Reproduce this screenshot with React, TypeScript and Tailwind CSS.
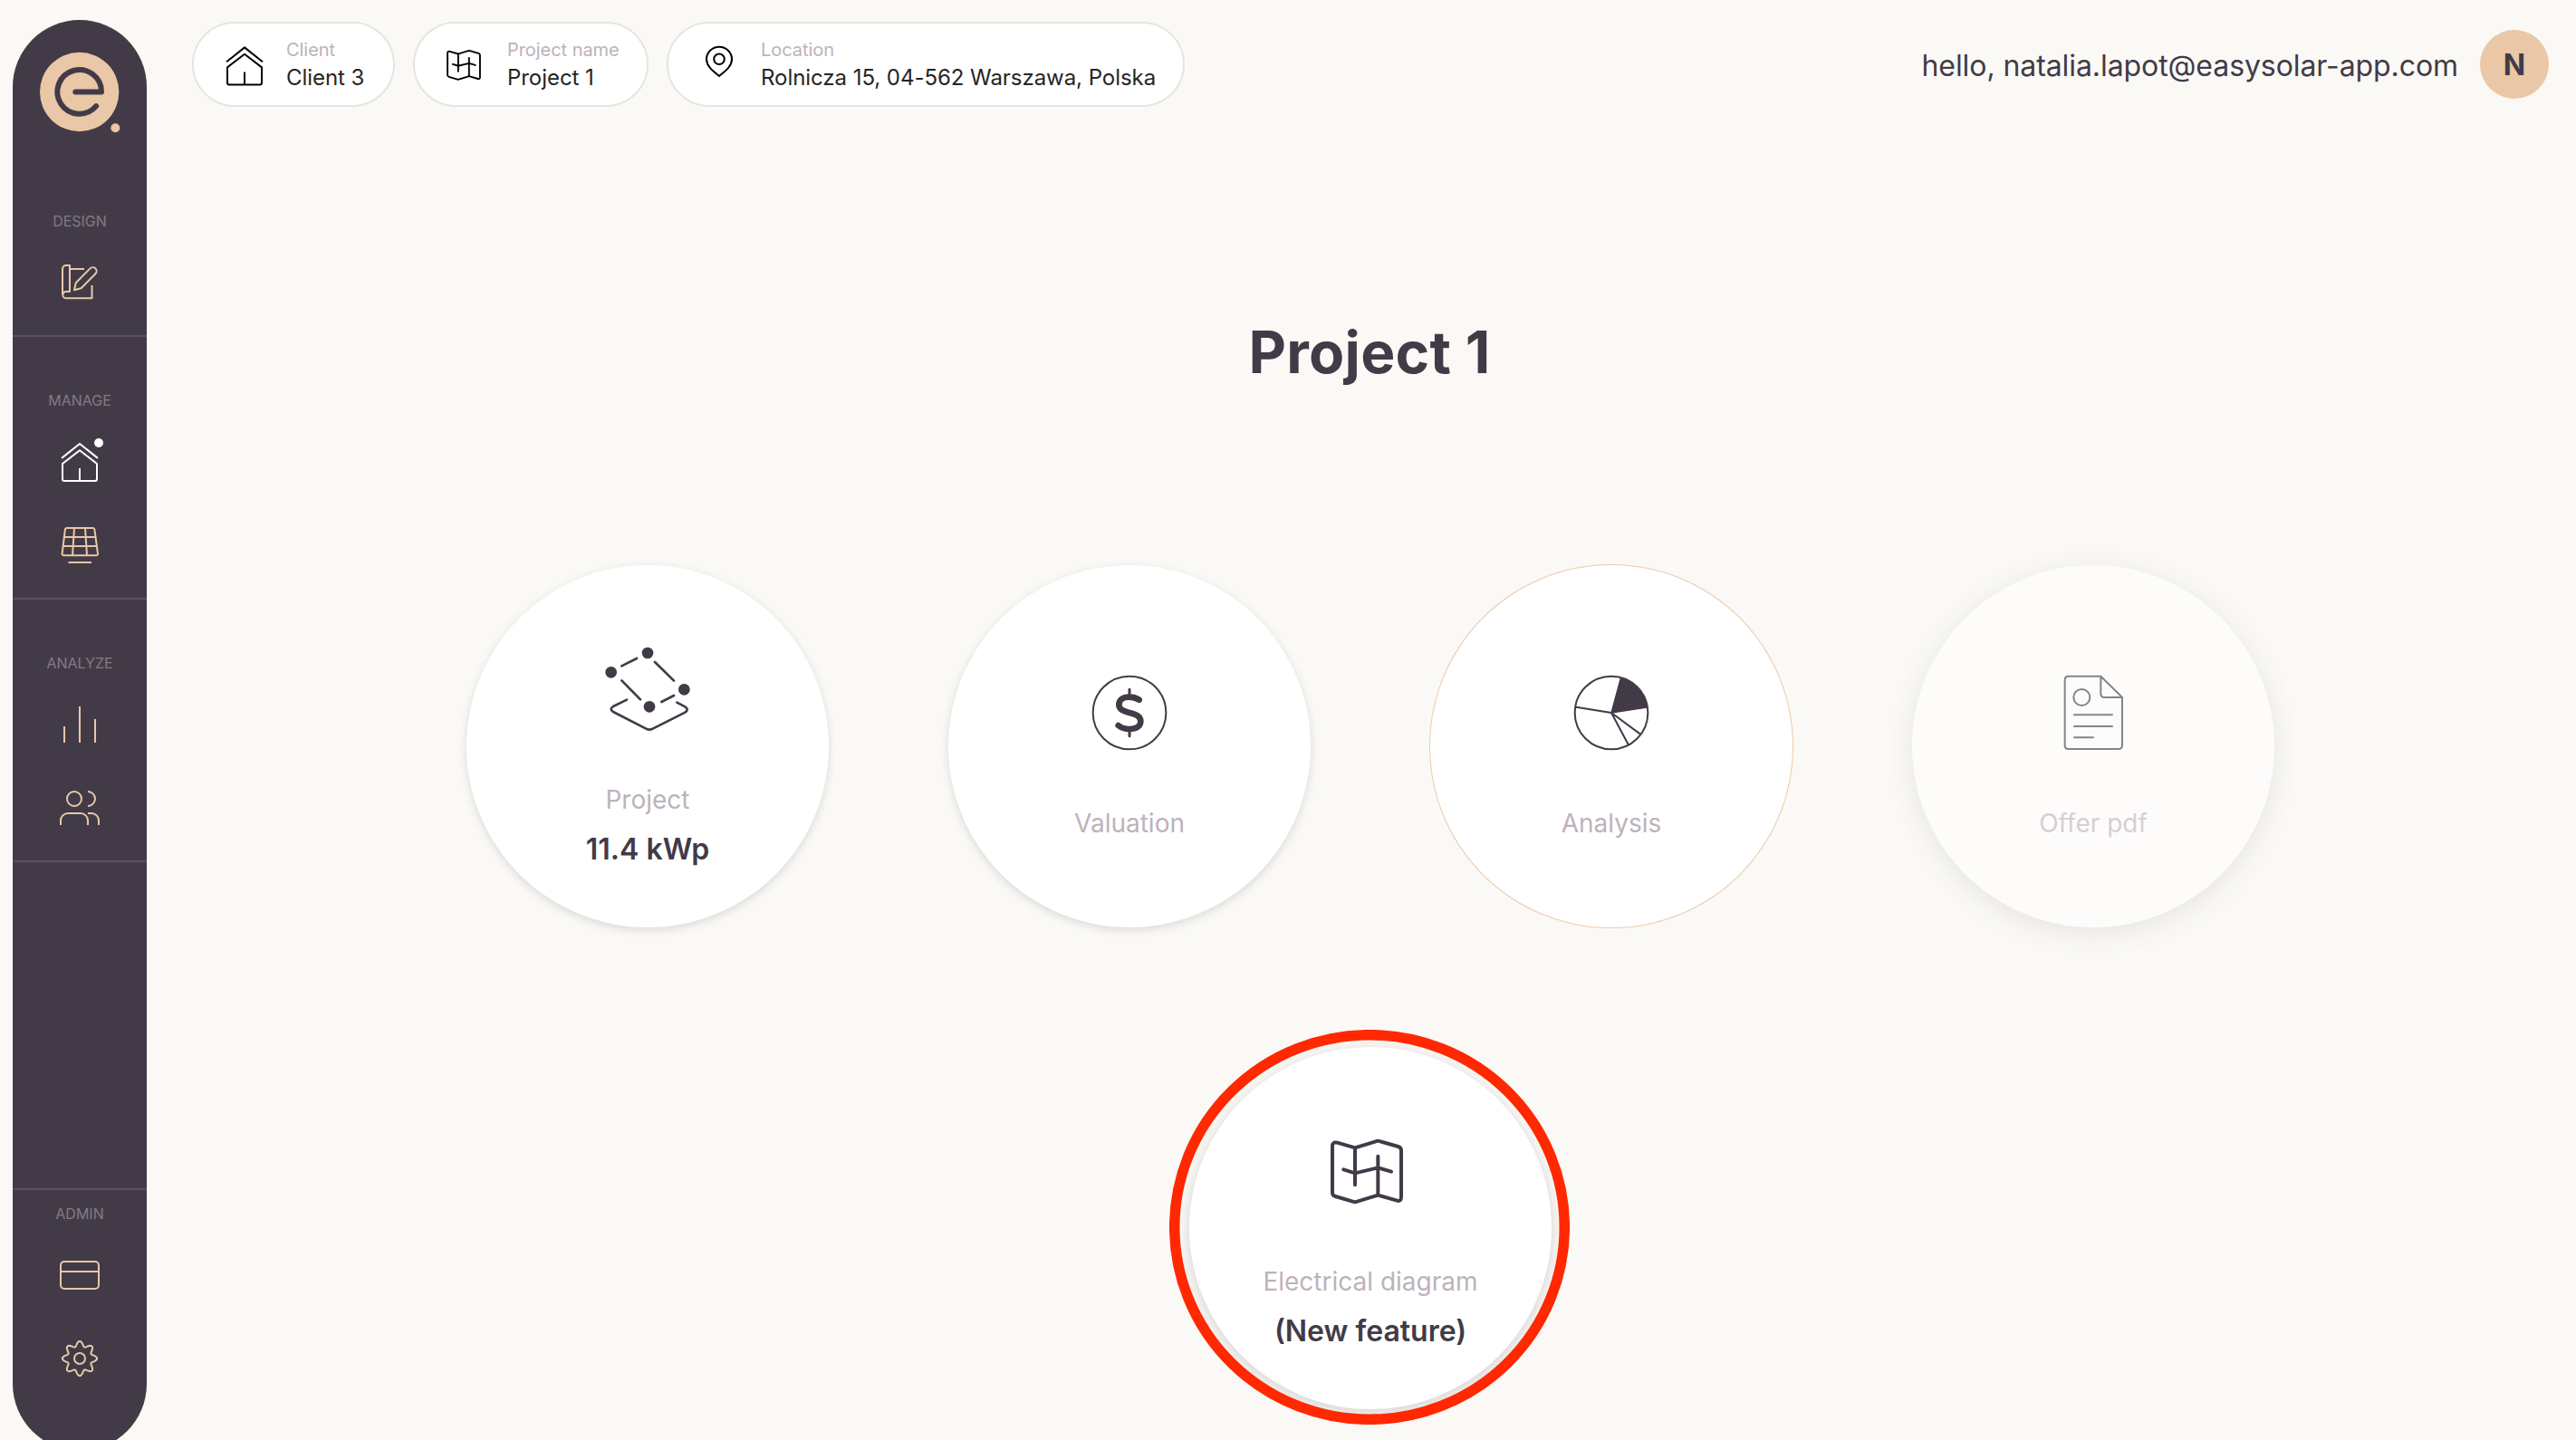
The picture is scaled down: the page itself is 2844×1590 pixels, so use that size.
import type { ReactNode } from 'react'

const MAP_OUTLINE =
  'M648 440L724 417L791 436Q801 439 801 449V603Q801 619 787 615L724 597L648 620L583 601Q573 598 573 588V435Q573 419 589 423L648 440V563M724 597V468M610 512L648 524L724 506L768 519'

// Eight soft teeth around a 44x44 box
const GEAR =
  'M' +
  Array.from({ length: 144 }, (_, i) => {
    const a = (i / 144) * Math.PI * 2
    const r = 16.3 + 2.8 * Math.cos(8 * a)
    return `${(22 + r * Math.sin(a)).toFixed(2)} ${(22 - r * Math.cos(a)).toFixed(2)}`
  }).join('L') +
  'Z'

function NavIcon({ children, className = 'text-[#e9c7a7]', viewBox = '0 0 44 44' }: { children: ReactNode; className?: string; viewBox?: string }) {
  return (
    <svg
      viewBox={viewBox}
      className={`size-[44px] shrink-0 overflow-visible ${className}`}
      fill="none"
      stroke="currentColor"
      strokeWidth="2"
      strokeLinejoin="round"
    >
      {children}
    </svg>
  )
}

function HomeShape() {
  return (
    <>
      <path d="M2.7 17.4L22 2L41.3 17.4" strokeLinecap="round" />
      <path d="M3 24L22 9.3L41 24V41Q41 43 39 43H5Q3 43 3 41ZM22 29V43" />
    </>
  )
}

function NavSection({ label, className, children }: { label: string; className: string; children: ReactNode }) {
  return (
    <div className={`flex flex-col items-center border-[#5b4f5e] ${className}`}>
      <div className="text-[16px] leading-[20px] text-[#857887]">{label}</div>
      <div className="mt-9 flex flex-col gap-12">{children}</div>
    </div>
  )
}

function Sidebar() {
  return (
    <aside className="mt-[22px] ml-[14px] flex h-[1580px] w-[148px] shrink-0 flex-col rounded-full bg-[#423b47]">
      {/* Logo */}
      <div className="flex h-[152px] justify-center pt-[35px]">
        <svg viewBox="129 171 270 270" className="size-[90px]" fill="none">
          <circle cx="263" cy="304.5" r="131" fill="#e9c7a7" />
          <path
            d="M250 304.5H336A73 73 0 1 0 318.5 351.5"
            stroke="#423b47"
            strokeWidth="18"
            strokeLinecap="round"
            strokeLinejoin="round"
          />
          <circle cx="382" cy="423.5" r="15" fill="#e9c7a7" />
        </svg>
      </div>

      <NavSection label="DESIGN" className="border-b-2 pt-[60px] pb-9">
        <NavIcon>
          <path d="M3 35V7A4 4 0 0 1 7 3H11V32H7A3.5 3.5 0 0 0 7 39.3H35.5V25M11 7H27" />
          <path d="M16 30.3L17.8 22.2L33.5 6.4A4.1 4.1 0 0 1 39.4 12.2L23.6 28.3Z" />
        </NavIcon>
      </NavSection>

      <NavSection label="MANAGE" className="border-b-2 pt-[60px] pb-9">
        <NavIcon className="text-white">
          <HomeShape />
          <circle cx="43" cy="1" r="5" fill="currentColor" stroke="none" />
        </NavIcon>
        <NavIcon>
          <path d="M8 3H36.5Q38.2 3 38.4 4.7L42 31.3Q42.2 33.2 40.4 33.2H4.2Q2.4 33.2 2.6 31.3L5.9 4.7Q6.1 3 8 3ZM5 13H39.4M4 23H40.8M16 3L14 33M28 3L30 33M9.5 41H35" />
        </NavIcon>
      </NavSection>

      <NavSection label="ANALYZE" className="border-b-2 pt-[60px] pb-9">
        <NavIcon>
          <path d="M5 42V24M22 42V2M39 42V16" />
        </NavIcon>
        <NavIcon>
          <circle cx="16" cy="12" r="8" />
          <path d="M1 41V36A8 8 0 0 1 9 28H23A8 8 0 0 1 31 36V41M31 4A8 8 0 0 1 31 20M31 28H35A8 8 0 0 1 43 36V41" />
        </NavIcon>
      </NavSection>

      <NavSection label="ADMIN" className="mt-auto h-[290px] border-t-2 pt-4">
        <NavIcon>
          <rect x="1" y="7" width="42" height="30" rx="4" />
          <path d="M1 18H43" />
        </NavIcon>
        <NavIcon>
          <path d={GEAR} />
          <circle cx="22" cy="22" r="6" />
        </NavIcon>
      </NavSection>
    </aside>
  )
}

function InfoPill({ icon, label, value, className }: { icon: ReactNode; label: string; value: string; className: string }) {
  return (
    <div className={`flex h-[94px] items-center gap-6 rounded-full border-2 border-[#e8e5e1] bg-white pl-[34px] whitespace-nowrap ${className}`}>
      {icon}
      <div>
        <div className="text-[20px] leading-[28px] tracking-[-0.05px] text-[#bdb2bb]">{label}</div>
        <div className="pt-px text-[24px] leading-[32px] tracking-[-0.05px] text-[#252525]">{value}</div>
      </div>
    </div>
  )
}

function Header() {
  return (
    <header className="flex h-[142px] items-center gap-5 pr-[30px] pl-[50px]">
      <InfoPill
        label="Client"
        value="Client 3"
        className="w-[224px]"
        icon={
          <NavIcon className="text-black" viewBox="0 -1.4 44 44">
            <HomeShape />
          </NavIcon>
        }
      />
      <InfoPill
        label="Project name"
        value="Project 1"
        className="w-[260px]"
        icon={
          <svg viewBox="559.7 373 280 280" className="size-[44px] shrink-0" fill="none" stroke="#000" strokeWidth="12" strokeLinecap="round" strokeLinejoin="round">
            <path d={MAP_OUTLINE} />
          </svg>
        }
      />
      <InfoPill
        label="Location"
        value="Rolnicza 15, 04-562 Warszawa, Polska"
        className="w-[572px]"
        icon={
          <NavIcon className="text-black">
            <path d="M22 35C16 30 8 24.5 8 16.5A14 13.8 0 0 1 36 16.5C36 24.5 28 30 22 35Z" />
            <circle cx="22" cy="16.3" r="5.8" />
          </NavIcon>
        }
      />
      <div className="ml-auto flex items-center gap-6">
        <span className="pt-[3px] text-[32px] tracking-[-0.08px] text-[#423b47]">hello, natalia.lapot@easysolar-app.com</span>
        <div className="flex size-[76px] items-center justify-center rounded-full bg-[#e9c7a7] pt-[2px] text-[32px] font-bold text-[#423b47]">N</div>
      </div>
    </header>
  )
}

function Tile({ icon, label, value, className = 'shadow-[0_3px_10px_rgba(66,59,71,0.16)]', children }: { icon: ReactNode; label: string; value?: string; className?: string; children?: ReactNode }) {
  return (
    <div className={`relative flex size-[400px] flex-col items-center justify-center rounded-full bg-white pt-5 ${className}`}>
      {icon}
      <div className="mt-[54px] text-[28px] leading-[40px] text-[#bdb2bb]">{label}</div>
      {value && <div className="pt-[17px] text-[32px] leading-[36px] font-semibold text-[#423b47]">{value}</div>}
      {children}
    </div>
  )
}

function TileIcon({ viewBox, strokeWidth = 6, children }: { viewBox: string; strokeWidth?: number; children: ReactNode }) {
  return (
    <svg
      viewBox={viewBox}
      className="size-[96px] shrink-0 text-[#423b47]"
      fill="none"
      stroke="currentColor"
      strokeWidth={strokeWidth}
      strokeLinecap="round"
      strokeLinejoin="round"
    >
      {children}
    </svg>
  )
}

export default function App() {
  return (
    <div className="flex h-[1590px] w-[2844px] overflow-hidden bg-[#faf9f5] font-['Inter',sans-serif]">
      <Sidebar />
      <main className="flex-1">
        <Header />

        <div className="ml-5 flex flex-col items-center">
          <h1 className="mt-[207px] mr-[2px] text-[64px] leading-[80px] font-bold tracking-[0.3px] text-[#423b47]">Project 1</h1>

          <div className="mt-[195px] flex gap-[132px]">
            <Tile
              label="Project"
              value="11.4 kWp"
              icon={
                <TileIcon viewBox="501 308 288 288" strokeWidth={8}>
                  <g fill="currentColor" stroke="none">
                    <circle cx="645" cy="332" r="19" />
                    <circle cx="524" cy="396" r="19" />
                    <circle cx="766" cy="453" r="19" />
                    <circle cx="651" cy="510" r="19" />
                  </g>
                  <path d="M559 375L609 350M669 362L732 424M559 423L621 486M691 494L732 473" />
                  <path d="M576 487L531 509Q517 518 531 527L640 583Q651 589 662 583L769 529Q783 519 769 510L742 496" />
                </TileIcon>
              }
            />
            <Tile
              label="Valuation"
              icon={
                <TileIcon viewBox="507 387 288 288">
                  <circle cx="651" cy="531" r="121" />
                  <path d="M651 454V474M651 590V608" strokeWidth="9" />
                  <path
                    d="M683 488C673 482 661 479 650 479C629 479 616 489 616 505C616 521 632 527 651 531C673 536 688 542 688 559C688 576 673 585 651 585C636 585 624 581 614 573"
                    strokeWidth="20"
                  />
                </TileIcon>
              }
            />
            <Tile
              label="Analysis"
              className="shadow-[0_0_0_1px_#eccbac]"
              icon={
                <TileIcon viewBox="513 387 288 288">
                  <circle cx="657" cy="531" r="121" />
                  <path d="M657 531L540 512M657 531L753 602M657 531L713 636" />
                  <path d="M657 531L688 416A121 121 0 0 1 775 513Z" fill="currentColor" strokeWidth="4" />
                </TileIcon>
              }
            />
            <Tile
              label="Offer pdf"
              className="opacity-60 shadow-[0_6px_26px_rgba(66,59,71,0.16)]"
              icon={
                <TileIcon viewBox="519 387 288 288">
                  <g stroke="#3a383c">
                    <path d="M688 410H581Q569 410 569 422V639Q569 651 581 651H747Q759 651 759 639V480L688 410V468Q688 480 700 480H759" />
                    <circle cx="625" cy="480" r="27" />
                    <path d="M600 538H726M600 576H726M600 613H663" />
                  </g>
                </TileIcon>
              }
            />
          </div>

          <div className="mt-[132px]">
            <Tile
              label="Electrical diagram"
              value="(New feature)"
              className="shadow-[0_4px_16px_rgba(66,59,71,0.2)]"
              icon={
                <TileIcon viewBox="555 373 288 288" strokeWidth={12}>
                  <path d={MAP_OUTLINE} />
                </TileIcon>
              }
            >
              {/* Highlight ring */}
              <svg viewBox="0 0 442 436" className="absolute top-[-19.5px] left-[-22px] h-[436px] w-[442px]" fill="none">
                <ellipse cx="221" cy="218" rx="215.3" ry="212.3" stroke="#ff2800" strokeWidth="11.5" />
              </svg>
            </Tile>
          </div>
        </div>
      </main>
    </div>
  )
}
